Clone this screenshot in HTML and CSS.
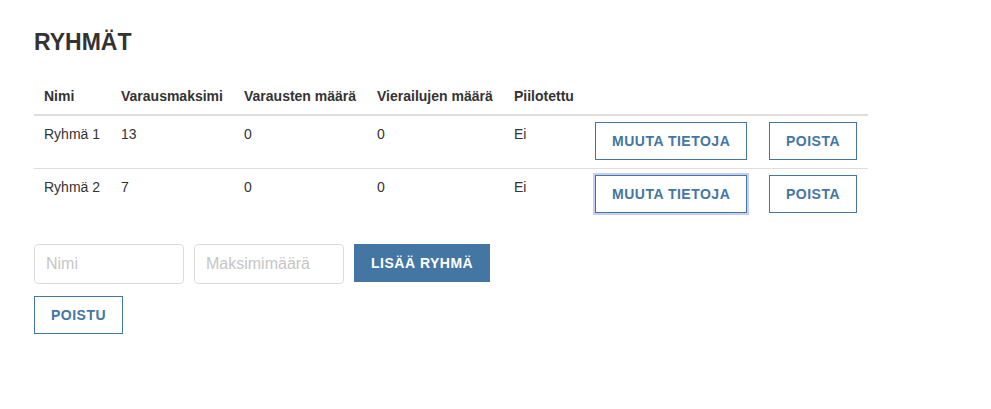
FILE: index.html
```html
<!DOCTYPE html>
<html lang="fi">
<head>
<meta charset="utf-8">
<title>Ryhmät</title>
<link rel="stylesheet" href="styles.css">
</head>
<body>
<div class="page">
  <h1 class="title">RYHMÄT</h1>
  <table class="groups">
    <colgroup>
      <col class="c1"><col class="c2"><col class="c3"><col class="c4"><col class="c5"><col class="c6"><col class="c7">
    </colgroup>
    <thead>
      <tr>
        <th class="first">Nimi</th>
        <th>Varausmaksimi</th>
        <th>Varausten määrä</th>
        <th>Vierailujen määrä</th>
        <th class="hidden-col">Piilotettu</th>
        <th></th>
        <th></th>
      </tr>
    </thead>
    <tbody>
      <tr>
        <td class="first">Ryhmä 1</td>
        <td>13</td>
        <td>0</td>
        <td>0</td>
        <td class="hidden-col">Ei</td>
        <td class="act"><button class="btn btn-outline">MUUTA TIETOJA</button></td>
        <td class="act"><button class="btn btn-outline">POISTA</button></td>
      </tr>
      <tr>
        <td class="first">Ryhmä 2</td>
        <td>7</td>
        <td>0</td>
        <td>0</td>
        <td class="hidden-col">Ei</td>
        <td class="act"><button class="btn btn-outline focused">MUUTA TIETOJA</button></td>
        <td class="act"><button class="btn btn-outline">POISTA</button></td>
      </tr>
    </tbody>
  </table>
  <div class="add-row">
    <input class="field" type="text" placeholder="Nimi">
    <input class="field" type="text" placeholder="Maksimimäärä">
    <button class="btn btn-primary">LISÄÄ RYHMÄ</button>
  </div>
  <div class="exit-row">
    <button class="btn btn-outline">POISTU</button>
  </div>
</div>
</body>
</html>
```
FILE: styles.css
```css
html, body {
  margin: 0;
  padding: 0;
  background: #ffffff;
}

body {
  font-family: "Liberation Sans", Arial, Helvetica, sans-serif;
  font-size: 14px;
  line-height: 20px;
  color: #333333;
}

.page {
  padding: 29px 34px;
}

.title {
  margin: 0 0 23px;
  font-size: 23px;
  line-height: 26px;
  font-weight: bold;
  color: #333333;
}

.groups {
  width: 834px;
  table-layout: fixed;
  border-collapse: collapse;
  margin-bottom: 23px;
}

.c1 { width: 78px; }
.c2 { width: 123px; }
.c3 { width: 133px; }
.c4 { width: 136px; }
.c5 { width: 82px; }
.c6 { width: 174px; }
.c7 { width: 108px; }

.groups th {
  text-align: left;
  font-weight: bold;
  padding: 8px 9px;
  border-bottom: 2px solid #dddddd;
  vertical-align: bottom;
  white-space: nowrap;
}

.groups td {
  padding: 8px 9px;
  vertical-align: top;
  white-space: nowrap;
}

.groups .first,
.groups .hidden-col {
  padding-left: 10px;
  padding-right: 8px;
}

.groups tbody tr + tr td {
  border-top: 1px solid #dddddd;
}

.groups td.act {
  padding-top: 6px;
}

.btn {
  display: inline-block;
  box-sizing: border-box;
  height: 38px;
  padding: 8px 16px;
  font-family: "Liberation Sans", Arial, Helvetica, sans-serif;
  font-size: 14px;
  line-height: 20px;
  font-weight: bold;
  letter-spacing: 0.5px;
  border: 1px solid #4476a4;
  border-radius: 0;
  cursor: pointer;
  white-space: nowrap;
}

.btn-outline {
  background: #ffffff;
  color: #4476a4;
}

.btn-primary {
  background: #4476a4;
  color: #ffffff;
}

.focused {
  box-shadow: 0 0 0 2px #c8cfee;
}

.add-row {
  display: flex;
  align-items: flex-start;
  gap: 10px;
}

.field {
  box-sizing: border-box;
  width: 150px;
  height: 40px;
  margin: 0;
  padding: 0 11px;
  border: 1px solid #dcdcdc;
  border-radius: 4px;
  font-family: "Liberation Sans", Arial, Helvetica, sans-serif;
  font-size: 16px;
  color: #333333;
  background: #ffffff;
}

.field::placeholder {
  color: #c6c6c6;
}

.exit-row {
  margin-top: 12px;
}
```
